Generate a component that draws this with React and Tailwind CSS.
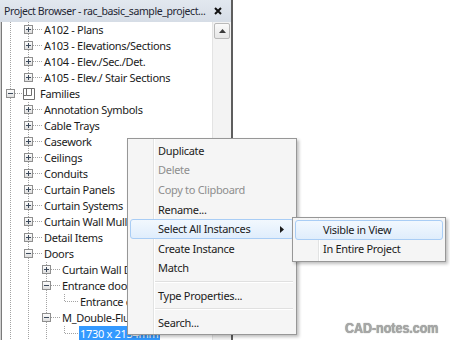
import React from 'react';

const FONT = { fontFamily: '"Noto Sans", "Open Sans", sans-serif' };

// tree rows: prefix = ancestor columns that carry a continuation line
const rows = [
  { label: 'A102 - Plans', prefix: [1], exp: 'plus', down: true },
  { label: 'A103 - Elevations/Sections', prefix: [1], exp: 'plus', down: true },
  { label: 'A104 - Elev./Sec./Det.', prefix: [1], exp: 'plus', down: true },
  { label: 'A105 - Elev./ Stair Sections', prefix: [1], exp: 'plus', down: false },
  { label: 'Families', prefix: [], exp: 'minus', down: true, icon: true },
  { label: 'Annotation Symbols', prefix: [1], exp: 'plus', down: true },
  { label: 'Cable Trays', prefix: [1], exp: 'plus', down: true },
  { label: 'Casework', prefix: [1], exp: 'plus', down: true },
  { label: 'Ceilings', prefix: [1], exp: 'plus', down: true },
  { label: 'Conduits', prefix: [1], exp: 'plus', down: true },
  { label: 'Curtain Panels', prefix: [1], exp: 'plus', down: true },
  { label: 'Curtain Systems', prefix: [1], exp: 'plus', down: true },
  { label: 'Curtain Wall Mullions', prefix: [1], exp: 'plus', down: true },
  { label: 'Detail Items', prefix: [1], exp: 'plus', down: true },
  { label: 'Doors', prefix: [1], exp: 'minus', down: true },
  { label: 'Curtain Wall Dbl Glass', prefix: [1, 1], exp: 'plus', down: true },
  { label: 'Entrance door', prefix: [1, 1], exp: 'minus', down: true },
  { label: 'Entrance door', prefix: [1, 1, 1], exp: null, down: false },
  { label: 'M_Double-Flush', prefix: [1, 1], exp: 'minus', down: true },
  { label: '1730 x 2134mm', prefix: [1, 1, 1], exp: null, down: false, selected: true },
];

const LINE = '#a3a3a3';

function Guide() {
  return (
    <svg width="18" height="16" className="shrink-0">
      <line x1="8.5" y1="0" x2="8.5" y2="16" stroke={LINE} strokeDasharray="1 1" />
    </svg>
  );
}

function NodeCell({ exp, down, icon }) {
  const w = icon ? 21 : 22;
  return (
    <svg width={w} height="16" className="shrink-0">
      <line x1="8.5" y1="0" x2="8.5" y2={down ? 16 : 8} stroke={LINE} strokeDasharray="1 1" />
      <line x1="9" y1="7.5" x2={w} y2="7.5" stroke={LINE} strokeDasharray="1 1" />
      {exp && (
        <g>
          <defs>
            <linearGradient id="bx" x1="0" y1="0" x2="0" y2="1">
              <stop offset="0" stopColor="#ffffff" />
              <stop offset="1" stopColor="#dcdcdc" />
            </linearGradient>
          </defs>
          <rect x="4.5" y="3.5" width="8" height="8" fill="url(#bx)" stroke="#8f8f8f" />
          <line x1="6" y1="7.5" x2="11" y2="7.5" stroke="#3c4a5c" />
          {exp === 'plus' && <line x1="8.5" y1="5" x2="8.5" y2="10" stroke="#3c4a5c" />}
        </g>
      )}
    </svg>
  );
}

function FamilyIcon() {
  return (
    <svg width="12" height="14" viewBox="0 0 12 14" className="shrink-0">
      <path d="M0.5 1.5 H11.5 V12.5 H0.5 Z" fill="#ffffff" stroke="#6f6f6f" />
      <path d="M3.5 1.5 V8.5 H8.5 V1.5" fill="none" stroke="#6f6f6f" />
      <path d="M0.5 8.5 H3.5" stroke="#6f6f6f" />
    </svg>
  );
}

function TreeRow({ row }) {
  return (
    <div className="flex h-4 items-center whitespace-nowrap">
      {row.prefix.map((g, i) => (
        <Guide key={i} />
      ))}
      <NodeCell exp={row.exp} down={row.down} icon={row.icon} />
      {row.icon && <FamilyIcon />}
      <span
        className={
          row.selected
            ? 'ml-[1px] h-4 bg-[#3399ff] px-[1px] leading-4 text-white'
            : row.icon
              ? 'ml-[5px] leading-4 text-[#1b1b1b]'
              : 'ml-[1px] px-[1px] leading-4 text-[#1b1b1b]'
        }
      >
        {row.label}
      </span>
    </div>
  );
}

function MenuItem({ label, disabled, hot, arrow }) {
  return (
    <div
      className={
        hot
          ? 'relative flex h-[19.6px] items-center whitespace-nowrap rounded-[3px] border border-[#a9cdf5] bg-[linear-gradient(#f2f8fe,#dfedfc)] pl-[27px]'
          : 'relative flex h-[19.6px] items-center whitespace-nowrap pl-[28px]'
      }
    >
      <span className={disabled ? 'text-[#8e8e8e]' : 'text-[#1b1b1b]'}>{label}</span>
      {arrow && (
        <svg width="4" height="7" className="absolute right-[9px] top-[5.5px]">
          <path d="M0 0 L4 3.5 L0 7 Z" fill="#1b1b1b" />
        </svg>
      )}
    </div>
  );
}

function Separator({ h }) {
  return (
    <div className={`flex flex-col justify-center ${h}`}>
      <div className="ml-[25px] mr-[1px] h-px bg-[#e0e0e0]" />
      <div className="ml-[25px] mr-[1px] h-px bg-white" />
    </div>
  );
}

const menuBg =
  'bg-[#f5f5f5] bg-[linear-gradient(to_right,transparent_25px,#e2e3e3_25px,#e2e3e3_26px,#ffffff_26px,#ffffff_27px,transparent_27px)]';

export default function App() {
  return (
    <div
      className="relative flex h-[340px] w-[450px] overflow-hidden bg-white text-[11px] leading-4 tracking-[-0.3px]"
      style={FONT}
    >
      {/* Project Browser panel */}
      <div className="flex w-[233px] shrink-0 flex-col border-r-2 border-[#5e5e5e]">
        <div className="flex h-[22px] shrink-0 items-center justify-between overflow-hidden whitespace-nowrap bg-[linear-gradient(#e2e8ef,#d6dde6)] pl-[4px] pr-[9px] text-[10.5px] tracking-[-0.4px] text-[#1e2633]">
          <span>Project Browser - rac_basic_sample_project...</span>
          <svg width="8" height="8" viewBox="0 0 8 8" className="shrink-0">
            <path d="M1 1 L7 7 M7 1 L1 7" stroke="#111" strokeWidth="2" />
          </svg>
        </div>
        <div className="flex flex-1 overflow-hidden">
          <div className="w-[2px] shrink-0 border-l border-r border-l-[#d0d0d0] border-r-[#7a7a7a]" />
          <div className="flex-1 overflow-hidden bg-white">
            {rows.map((r, i) => (
              <TreeRow key={i} row={r} />
            ))}
          </div>
          <div className="w-[19px] shrink-0 border-l border-[#e3e3e3] bg-[#f3f3f3] pl-[1px] pt-[1px]">
            <div className="flex h-[16px] w-[16px] items-center justify-center rounded-[2px] border border-[#b9b9b9] bg-[linear-gradient(#fafafa,#e6e6e6)]">
              <svg width="7" height="4">
                <path d="M0 4 L3.5 0 L7 4 Z" fill="#3a3a3a" />
              </svg>
            </div>
          </div>
        </div>
      </div>

      {/* Context menu */}
      <div
        className={`absolute left-[127px] top-[138px] w-[170px] border border-[#979797] p-[2px] shadow-[2px_2px_3px_rgba(0,0,0,0.25)] ${menuBg}`}
      >
        <MenuItem label="Duplicate" />
        <MenuItem label="Delete" disabled />
        <MenuItem label="Copy to Clipboard" disabled />
        <MenuItem label="Rename..." />
        <MenuItem label="Select All Instances" hot arrow />
        <MenuItem label="Create Instance" />
        <MenuItem label="Match" />
        <Separator h="h-[8px]" />
        <MenuItem label="Type Properties..." />
        <Separator h="h-[7px]" />
        <MenuItem label="Search..." />
      </div>

      {/* Submenu */}
      <div
        className={`absolute left-[292px] top-[217px] w-[154px] border border-[#979797] p-[2px] shadow-[2px_2px_3px_rgba(0,0,0,0.25)] ${menuBg}`}
      >
        <MenuItem label="Visible in View" hot />
        <MenuItem label="In Entire Project" />
      </div>

      {/* watermark */}
      <div
        className="absolute left-[345px] top-[319px] origin-left scale-x-[0.83] whitespace-nowrap text-[15px] font-bold leading-[18px] tracking-normal text-[#a8a8a8] [text-shadow:0_0_1px_#6e6e6e]"
        style={{ fontFamily: '"Liberation Sans", Arial, sans-serif' }}
      >
        CAD-notes.com
      </div>
    </div>
  );
}
